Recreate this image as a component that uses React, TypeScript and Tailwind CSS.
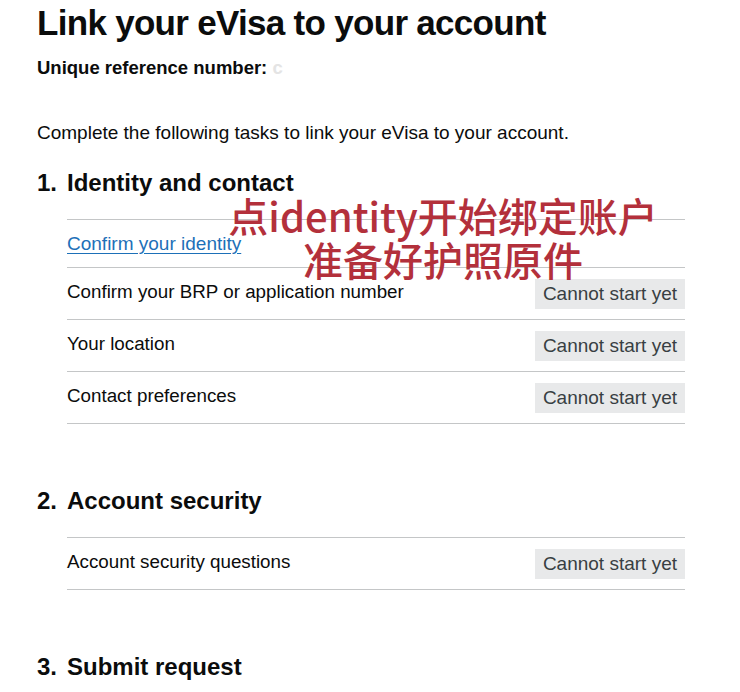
import React from "react";

type Task = { label: string; link?: boolean; status?: string };

const sections: { num: string; title: string; tasks: Task[] }[] = [
  {
    num: "1.",
    title: "Identity and contact",
    tasks: [
      { label: "Confirm your identity", link: true },
      { label: "Confirm your BRP or application number", status: "Cannot start yet" },
      { label: "Your location", status: "Cannot start yet" },
      { label: "Contact preferences", status: "Cannot start yet" },
    ],
  },
  {
    num: "2.",
    title: "Account security",
    tasks: [{ label: "Account security questions", status: "Cannot start yet" }],
  },
  { num: "3.", title: "Submit request", tasks: [] },
];

function TaskRow({ task, tall }: { task: Task; tall: boolean }) {
  return (
    <li
      className={`flex items-center justify-between border-b border-[#c4c6c7] ${
        tall ? "h-[52px]" : "h-[48px]"
      }`}
    >
      {task.link ? (
        <a
          href="#"
          className="text-[19px] leading-[24px] text-[#1d70b8] underline decoration-1 underline-offset-[3px]"
        >
          {task.label}
        </a>
      ) : (
        <span className="-mt-[3px] text-[18.8px] leading-[24px] text-[#0b0c0c]">{task.label}</span>
      )}
      {task.status && (
        <span className="flex h-[30px] items-center bg-[#e8e9ea] px-[8px] text-[19px] leading-[24px] text-[#383f43]">
          {task.status}
        </span>
      )}
    </li>
  );
}

export default function App() {
  return (
    <div
      className="relative min-h-[692px] w-[740px] overflow-hidden bg-white pl-[37px] text-[#0b0c0c]"
      style={{ fontFamily: '"Liberation Sans", Arial, sans-serif' }}
    >
      <h1 className="mt-[3px] text-[35px] font-bold leading-[40px] tracking-[-0.7px]">
        Link your eVisa to your account
      </h1>
      <p className="mt-[13px] text-[18.5px] font-bold leading-[24px]">
        Unique reference number: <span className="text-[#e4e4e4]">c</span>
      </p>
      <p className="mt-[41px] text-[19px] leading-[24px]">
        Complete the following tasks to link your eVisa to your account.
      </p>

      {sections.map((section, i) => (
        <section key={section.num} className={i === 0 ? "mt-[23px]" : "mt-[62px]"}>
          <h2 className="flex text-[24px] font-bold leading-[30px]">
            <span className="w-[30px]">{section.num}</span>
            <span>{section.title}</span>
          </h2>
          {section.tasks.length > 0 && (
            <ul className="ml-[30px] mt-[21px] w-[618px] border-t border-[#c4c6c7]">
              {section.tasks.map((task) => (
                <TaskRow key={task.label} task={task} tall={!!task.status} />
              ))}
            </ul>
          )}
        </section>
      ))}

      <div
        className="absolute left-[443px] top-[193px] -translate-x-1/2 whitespace-nowrap text-center text-[40px] font-medium leading-[44px] text-[#b3303b]"
        style={{ fontFamily: '"Noto Sans CJK SC", "Noto Sans", sans-serif' }}
      >
        <div>点identity开始绑定账户</div>
        <div>准备好护照原件</div>
      </div>
    </div>
  );
}
